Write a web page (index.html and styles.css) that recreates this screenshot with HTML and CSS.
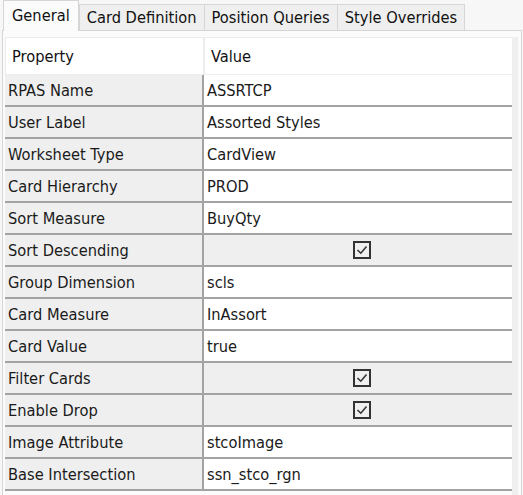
FILE: index.html
```html
<!DOCTYPE html>
<html>
<head>
<meta charset="utf-8">
<link rel="stylesheet" href="styles.css">
</head>
<body>
<div class="window">
  <div class="tabs">
    <div class="tab active">General</div>
    <div class="tab">Card Definition</div>
    <div class="tab">Position Queries</div>
    <div class="tab">Style Overrides</div>
  </div>
  <div class="panel">
    <div class="grid">
      <div class="head">
        <div class="hcell prop">Property</div>
        <div class="hcell val">Value</div>
      </div>
      <div class="row"><div class="cell prop">RPAS Name</div><div class="cell val">ASSRTCP</div></div>
      <div class="row"><div class="cell prop">User Label</div><div class="cell val">Assorted Styles</div></div>
      <div class="row"><div class="cell prop">Worksheet Type</div><div class="cell val">CardView</div></div>
      <div class="row"><div class="cell prop">Card Hierarchy</div><div class="cell val">PROD</div></div>
      <div class="row"><div class="cell prop">Sort Measure</div><div class="cell val">BuyQty</div></div>
      <div class="row"><div class="cell prop">Sort Descending</div><div class="cell val check"><span class="box"><svg viewBox="0 0 18 18" width="18" height="18"><rect x="1" y="1" width="16" height="16" fill="none" stroke="#333" stroke-width="2"/><path d="M4.5 9 L7.8 12.2 L13.5 5.5" fill="none" stroke="#333" stroke-width="1.6"/></svg></span></div></div>
      <div class="row"><div class="cell prop">Group Dimension</div><div class="cell val">scls</div></div>
      <div class="row"><div class="cell prop">Card Measure</div><div class="cell val">InAssort</div></div>
      <div class="row"><div class="cell prop">Card Value</div><div class="cell val">true</div></div>
      <div class="row"><div class="cell prop">Filter Cards</div><div class="cell val check"><span class="box"><svg viewBox="0 0 18 18" width="18" height="18"><rect x="1" y="1" width="16" height="16" fill="none" stroke="#333" stroke-width="2"/><path d="M4.5 9 L7.8 12.2 L13.5 5.5" fill="none" stroke="#333" stroke-width="1.6"/></svg></span></div></div>
      <div class="row"><div class="cell prop">Enable Drop</div><div class="cell val check"><span class="box"><svg viewBox="0 0 18 18" width="18" height="18"><rect x="1" y="1" width="16" height="16" fill="none" stroke="#333" stroke-width="2"/><path d="M4.5 9 L7.8 12.2 L13.5 5.5" fill="none" stroke="#333" stroke-width="1.6"/></svg></span></div></div>
      <div class="row"><div class="cell prop">Image Attribute</div><div class="cell val">stcoImage</div></div>
      <div class="row"><div class="cell prop">Base Intersection</div><div class="cell val">ssn_stco_rgn</div></div>
    </div>
  </div>
</div>
</body>
</html>
```
FILE: styles.css
```css
* { box-sizing: border-box; }
html, body { margin: 0; padding: 0; }
body {
  width: 523px;
  height: 495px;
  background: #f7f7f7;
  font-family: "DejaVu Sans Condensed", "DejaVu Sans", sans-serif;
  font-size: 16.3px;
  color: #1a1a1a;
  overflow: hidden;
}
.window {
  display: flex;
  flex-direction: column;
  height: 100%;
}
.tabs {
  display: flex;
  align-items: flex-end;
  height: 30px;
  padding-left: 3px;
  position: relative;
  z-index: 1;
}
.tab {
  height: 26px;
  padding: 0 7px;
  display: flex;
  align-items: center;
  background: #efefef;
  border: 1px solid #d6d6d6;
  border-bottom: none;
  margin-left: -1px;
  color: #111;
  white-space: nowrap;
}
.tab.active {
  height: 31px;
  margin-bottom: -1px;
  background: #fbfbfb;
  padding: 0 8px 2px 8px;
  margin-left: 0;
  margin-right: 1px;
}
.panel {
  flex: 1;
  border: 1px solid #d6d6d6;
  border-bottom: none;
  margin-left: 2px;
  margin-right: 1px;
  background: #fbfbfb;
  padding: 6px 8px 0 2px;
  position: relative;
}
.panel::after {
  content: "";
  position: absolute;
  top: 6px;
  right: 3px;
  bottom: 0;
  width: 6px;
  background: #efefef;
}
.grid {
  display: flex;
  flex-direction: column;
}
.head {
  display: flex;
  height: 38px;
  background: #fff;
  border: 1px solid #ececec;
}
.hcell {
  display: flex;
  align-items: center;
  padding-left: 6px;
  color: #111;
}
.hcell.prop { width: 199px; border-right: 2px solid #ececec; }
.hcell.val { flex: 1; }
.row {
  display: flex;
  height: 32px;
  border-bottom: 2px solid #a3a3a3;
}
.cell {
  display: flex;
  align-items: center;
  white-space: nowrap;
}
.cell.prop {
  width: 199px;
  background: #efefef;
  padding-left: 3px;
  border-right: 2px solid #a3a3a3;
}
.cell.val {
  flex: 1;
  background: #fff;
  padding-left: 3px;
}
.cell.check {
  background: #efefef;
  justify-content: center;
  padding-left: 6px;
}
.box { display: block; width: 18px; height: 18px; }
.box svg { display: block; }
```
